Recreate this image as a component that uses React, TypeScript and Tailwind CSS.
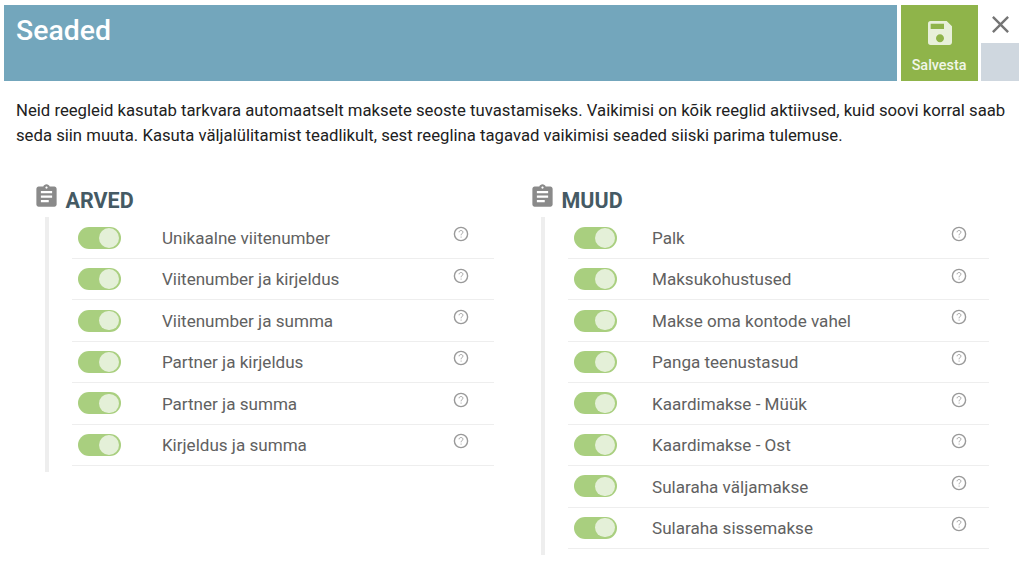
import { useState } from 'react';
import { MdAssignment, MdClose, MdSave } from 'react-icons/md';

type Rule = {
    name: string;
    active: boolean;
};

const invoiceRules: Rule[] = [
    { name: 'Unikaalne viitenumber', active: true },
    { name: 'Viitenumber ja kirjeldus', active: true },
    { name: 'Viitenumber ja summa', active: true },
    { name: 'Partner ja kirjeldus', active: true },
    { name: 'Partner ja summa', active: true },
    { name: 'Kirjeldus ja summa', active: true }
];

const otherRules: Rule[] = [
    { name: 'Palk', active: true },
    { name: 'Maksukohustused', active: true },
    { name: 'Makse oma kontode vahel', active: true },
    { name: 'Panga teenustasud', active: true },
    { name: 'Kaardimakse - Müük', active: true },
    { name: 'Kaardimakse - Ost', active: true },
    { name: 'Sularaha väljamakse', active: true },
    { name: 'Sularaha sissemakse', active: true }
];

// Circled question mark with a small, thin mark
function HelpIcon() {
    return (
        <svg viewBox="0 0 16 16" fill="none" className="mt-[8.6px] size-4 shrink-0 text-[#999999]">
            <circle cx="8" cy="8" r="6.6" stroke="currentColor" strokeWidth="1.4" />
            <path
                d="M6.1 6.3C6.1 5.2 6.9 4.5 8 4.5s1.9.7 1.9 1.7c0 1.3-1.8 1.5-1.8 3.1"
                stroke="currentColor"
                strokeWidth="0.9"
            />
            <circle cx="8.1" cy="11" r="0.6" fill="currentColor" />
        </svg>
    );
}

function Toggle({ active, label, onChange }: { active: boolean; label: string; onChange: () => void }) {
    return (
        <button
            type="button"
            role="switch"
            aria-checked={active}
            aria-label={label}
            onClick={onChange}
            className={`mt-[9.2px] flex h-[22px] w-[43px] shrink-0 items-center rounded-full px-[2px] ${
                active ? 'justify-end bg-[#a9cf7f]' : 'justify-start bg-gray-300'
            }`}
        >
            <span className="size-[19.5px] rounded-full bg-[#e4f0d8]" />
        </button>
    );
}

function RuleGroup({ title, rules, labelClass }: { title: string; rules: Rule[]; labelClass: string }) {
    const [items, setItems] = useState<Rule[]>(rules);

    // Flip a single rule on or off
    const handleToggle = (index: number) => {
        setItems((prev) => prev.map((item, i) => (i === index ? { ...item, active: !item.active } : item)));
    };

    return (
        <section>
            <div className="flex h-[34px]">
                <MdAssignment className="-ml-[0.5px] size-[27px] shrink-0 text-[#8a8a8a]" />
                <h2 className="mt-[4px] ml-[5.5px] text-[21.5px] leading-[28px] font-bold text-[#455a64]">{title}</h2>
            </div>

            <div className="ml-[11px] border-l-4 border-[#eeeeee] pt-[0.4px] pb-[6px] pl-[23px]">
                {items.map((item, index) => (
                    <div key={item.name} className="flex h-[41.43px] border-b border-[#eeeeee] pl-[6px]">
                        <Toggle active={item.active} label={item.name} onChange={() => handleToggle(index)} />
                        <span className={`mt-[8.4px] shrink-0 text-[17.07px] leading-[24px] text-[#616161] ${labelClass}`}>
                            {item.name}
                        </span>
                        <HelpIcon />
                    </div>
                ))}
            </div>
        </section>
    );
}

function App() {
    return (
        <div className="h-[569px] overflow-hidden bg-white pt-[5px] pl-1 font-['Roboto',sans-serif]">
            {/* Header */}
            <header className="flex h-[76px]">
                <div className="w-[893.4px] bg-[#73a6bc] pl-3">
                    <h1 className="pt-[8px] text-[28.4px] leading-[36px] font-medium text-white">Seaded</h1>
                </div>
                <button
                    type="button"
                    className="ml-1 flex w-[76.4px] flex-col items-center bg-[#8fb44a] pt-[12px] text-[#f1f6e8]"
                >
                    <MdSave className="size-8 text-[#e8f0da]" />
                    <span className="mt-[7px] mr-px text-[14.4px] leading-[20px] font-medium">Salvesta</span>
                </button>
                <div className="ml-[3.2px] flex w-[38px] flex-col">
                    <button type="button" aria-label="Sulge" className="flex h-[38px] items-center justify-center pl-px">
                        <MdClose className="size-[29px] text-[#757575]" />
                    </button>
                    <div className="flex-1 bg-[#cfd7df]" />
                </div>
            </header>

            {/* Intro text */}
            <p className="pt-[17.4px] pl-3 text-[16.72px] leading-[24.5px] whitespace-nowrap text-[#212121]">
                Neid reegleid kasutab tarkvara automaatselt maksete seoste tuvastamiseks. Vaikimisi on kõik reeglid aktiivsed, kuid soovi korral saab
                <br />
                seda siin muuta. Kasuta väljalülitamist teadlikult, sest reeglina tagavad vaikimisi seaded siiski parima tulemuse.
            </p>

            {/* Rule groups */}
            <main className="flex pt-[35.8px] pl-[29.5px]">
                <div className="w-[460px]">
                    <RuleGroup title="ARVED" rules={invoiceRules} labelClass="ml-[41.4px] w-[291.3px]" />
                </div>
                <div className="ml-[36px] w-[459px]">
                    <RuleGroup title="MUUD" rules={otherRules} labelClass="ml-[35.5px] w-[299.2px]" />
                </div>
            </main>
        </div>
    );
}

export default App;
